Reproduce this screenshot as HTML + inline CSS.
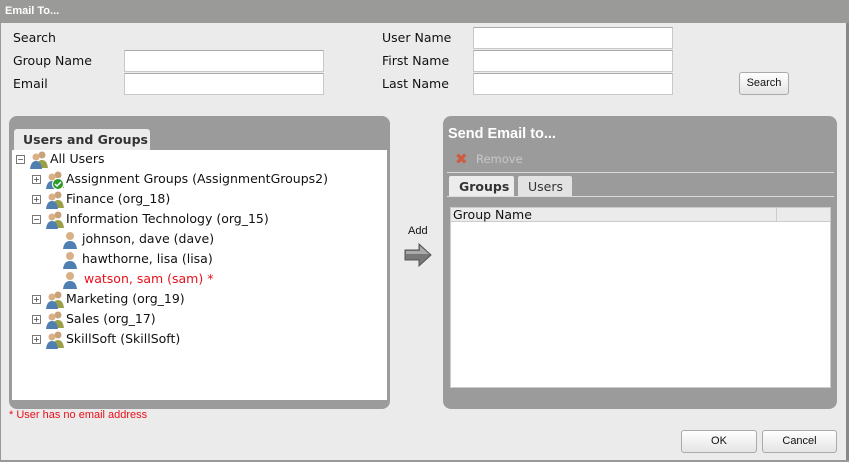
<!DOCTYPE html>
<html><head><style>
body{margin:0;width:849px;height:462px;background:#ebebeb;font-family:"DejaVu Sans","Liberation Sans",sans-serif;font-size:12px;color:#111;position:relative;overflow:hidden}
.a{position:absolute}
.t{position:absolute;white-space:nowrap}
.inp{position:absolute;width:197px;height:20px;background:#fff;border:1px solid #c8c8c8;box-sizing:border-box;border-top-color:#aaa}
.btn{position:absolute;background:linear-gradient(#fff,#e4e4e4);border:1px solid #aaa;border-radius:3px;box-sizing:border-box;font-size:11px;text-align:center;font-family:"Liberation Sans",sans-serif}
.row{position:absolute;height:20px;line-height:20px;font-size:12.5px;white-space:nowrap}
.pm{position:absolute;width:7px;height:7px;border:1px solid #777;background:#fff;font-size:8px;line-height:7px;text-align:center;color:#333}
</style></head><body>
<div class="a" style="left:0;top:0;width:849px;height:23px;background:#9a9a98"></div>
<div class="t" style="left:5px;top:5px;color:#fff;font-weight:bold;font-size:11px;font-family:'Liberation Sans',sans-serif">Email To...</div>
<div class="a" style="left:846px;top:23px;width:3px;height:439px;background:#888"></div>
<div class="a" style="left:0;top:23px;width:1px;height:439px;background:#999"></div>
<div class="a" style="left:0;top:460px;width:849px;height:2px;background:#999"></div>

<div class="t" style="left:13px;top:30px;font-size:12.5px">Search</div>
<div class="t" style="left:13px;top:53px;font-size:12.5px">Group Name</div>
<div class="t" style="left:13px;top:76px;font-size:12.5px">Email</div>
<div class="t" style="left:382px;top:30px;font-size:12.5px">User Name</div>
<div class="t" style="left:382px;top:53px;font-size:12.5px">First Name</div>
<div class="t" style="left:382px;top:76px;font-size:12.5px">Last Name</div>
<div class="inp" style="left:124px;top:50px;width:200px;height:22px"></div>
<div class="inp" style="left:124px;top:73px;width:200px;height:22px"></div>
<div class="inp" style="left:473px;top:27px;width:200px;height:22px"></div>
<div class="inp" style="left:473px;top:50px;width:200px;height:22px"></div>
<div class="inp" style="left:473px;top:73px;width:200px;height:22px"></div>
<div class="btn" style="left:739px;top:72px;width:50px;height:23px;line-height:21px">Search</div>

<!-- left panel -->
<div class="a" style="left:9px;top:116px;width:381px;height:293px;background:#9b9b9b;border-radius:8px"></div>
<div class="a" style="left:14px;top:129px;width:136px;height:22px;background:#ececec;border-radius:3px 3px 0 0"></div>
<div class="t" style="left:23px;top:132px;font-weight:bold;font-size:12.5px;color:#333">Users and Groups</div>
<div class="a" style="left:12px;top:150px;width:375px;height:250px;background:#fff"></div>

<div class="pm" style="left:16px;top:155px">−</div>
<svg class="a" style="left:28px;top:150px" width="22" height="20"><circle cx="14" cy="5" r="3.5" fill="#c9a27a"/><path d="M8 18 Q9 10 14 10 Q19 10 20 18Z" fill="#9aa04a"/><circle cx="8" cy="7" r="3.5" fill="#d9b088"/><path d="M2 19 Q3 11 8 11 Q13 11 14 19Z" fill="#4f7fb0"/></svg>
<div class="row" style="left:50px;top:149px">All Users</div>

<div class="pm" style="left:32px;top:175px">+</div>
<svg class="a" style="left:44px;top:170px" width="22" height="20"><circle cx="14" cy="5" r="3.5" fill="#c9a27a"/><path d="M8 18 Q9 10 14 10 Q19 10 20 18Z" fill="#9aa04a"/><circle cx="8" cy="7" r="3.5" fill="#d9b088"/><path d="M2 19 Q3 11 8 11 Q13 11 14 19Z" fill="#4f7fb0"/><circle cx="14" cy="14" r="5.5" fill="#2a9a2a" stroke="#fff"/><path d="M11 14 l2 2 l4 -4" stroke="#fff" stroke-width="1.5" fill="none"/></svg>
<div class="row" style="left:66px;top:169px">Assignment Groups (AssignmentGroups2)</div>

<div class="pm" style="left:32px;top:195px">+</div>
<svg class="a" style="left:44px;top:190px" width="22" height="20"><circle cx="14" cy="5" r="3.5" fill="#c9a27a"/><path d="M8 18 Q9 10 14 10 Q19 10 20 18Z" fill="#9aa04a"/><circle cx="8" cy="7" r="3.5" fill="#d9b088"/><path d="M2 19 Q3 11 8 11 Q13 11 14 19Z" fill="#4f7fb0"/></svg>
<div class="row" style="left:66px;top:189px">Finance (org_18)</div>

<div class="pm" style="left:32px;top:215px">−</div>
<svg class="a" style="left:44px;top:210px" width="22" height="20"><circle cx="14" cy="5" r="3.5" fill="#c9a27a"/><path d="M8 18 Q9 10 14 10 Q19 10 20 18Z" fill="#9aa04a"/><circle cx="8" cy="7" r="3.5" fill="#d9b088"/><path d="M2 19 Q3 11 8 11 Q13 11 14 19Z" fill="#4f7fb0"/></svg>
<div class="row" style="left:66px;top:209px">Information Technology (org_15)</div>

<svg class="a" style="left:62px;top:230px" width="16" height="20"><circle cx="8" cy="6" r="4" fill="#d9b088"/><path d="M1 19 Q2 11 8 11 Q14 11 15 19Z" fill="#4f7fb0"/></svg>
<div class="row" style="left:82px;top:229px">johnson, dave (dave)</div>
<svg class="a" style="left:62px;top:250px" width="16" height="20"><circle cx="8" cy="6" r="4" fill="#d9b088"/><path d="M1 19 Q2 11 8 11 Q14 11 15 19Z" fill="#4f7fb0"/></svg>
<div class="row" style="left:82px;top:249px">hawthorne, lisa (lisa)</div>
<svg class="a" style="left:62px;top:270px" width="16" height="20"><circle cx="8" cy="6" r="4" fill="#d9b088"/><path d="M1 19 Q2 11 8 11 Q14 11 15 19Z" fill="#4f7fb0"/></svg>
<div class="row" style="left:84px;top:269px;color:#e8101a">watson, sam (sam) *</div>

<div class="pm" style="left:32px;top:295px">+</div>
<svg class="a" style="left:44px;top:290px" width="22" height="20"><circle cx="14" cy="5" r="3.5" fill="#c9a27a"/><path d="M8 18 Q9 10 14 10 Q19 10 20 18Z" fill="#9aa04a"/><circle cx="8" cy="7" r="3.5" fill="#d9b088"/><path d="M2 19 Q3 11 8 11 Q13 11 14 19Z" fill="#4f7fb0"/></svg>
<div class="row" style="left:66px;top:289px">Marketing (org_19)</div>
<div class="pm" style="left:32px;top:315px">+</div>
<svg class="a" style="left:44px;top:310px" width="22" height="20"><circle cx="14" cy="5" r="3.5" fill="#c9a27a"/><path d="M8 18 Q9 10 14 10 Q19 10 20 18Z" fill="#9aa04a"/><circle cx="8" cy="7" r="3.5" fill="#d9b088"/><path d="M2 19 Q3 11 8 11 Q13 11 14 19Z" fill="#4f7fb0"/></svg>
<div class="row" style="left:66px;top:309px">Sales (org_17)</div>
<div class="pm" style="left:32px;top:335px">+</div>
<svg class="a" style="left:44px;top:330px" width="22" height="20"><circle cx="14" cy="5" r="3.5" fill="#c9a27a"/><path d="M8 18 Q9 10 14 10 Q19 10 20 18Z" fill="#9aa04a"/><circle cx="8" cy="7" r="3.5" fill="#d9b088"/><path d="M2 19 Q3 11 8 11 Q13 11 14 19Z" fill="#4f7fb0"/></svg>
<div class="row" style="left:66px;top:329px">SkillSoft (SkillSoft)</div>

<div class="t" style="left:9px;top:409px;color:#e8101a;font-size:11px;font-family:'Liberation Sans',sans-serif">* User has no email address</div>

<!-- add -->
<div class="t" style="left:408px;top:225px;font-size:11px;font-family:'Liberation Sans',sans-serif">Add</div>
<svg class="a" style="left:403px;top:242px" width="30" height="26"><path d="M2 8 H16 V2 L28 13 L16 24 V18 H2Z" fill="#777" stroke="#555"/><path d="M3 9 H17 V4 L26 12 H3Z" fill="#aaa"/></svg>

<!-- right panel -->
<div class="a" style="left:443px;top:116px;width:394px;height:293px;background:#9b9b9b;border-radius:8px"></div>
<div class="t" style="left:448px;top:126px;color:#fff;font-weight:bold;font-size:14.5px;font-family:'Liberation Sans',sans-serif">Send Email to...</div>
<div class="t" style="left:455px;top:150px;color:#d05a40;font-weight:bold;font-size:15px">✖</div>
<div class="t" style="left:476px;top:152px;color:#c8c8c8;font-size:11.5px">Remove</div>
<div class="a" style="left:447px;top:172px;width:387px;height:1px;background:#ddd"></div>
<div class="a" style="left:449px;top:176px;width:65px;height:21px;background:#ececec;border-radius:2px 2px 0 0"></div>
<div class="t" style="left:459px;top:179px;font-weight:bold;font-size:12.5px;color:#333">Groups</div>
<div class="a" style="left:518px;top:176px;width:54px;height:20px;background:#e2e2e2;border-radius:2px 2px 0 0"></div>
<div class="t" style="left:528px;top:179px;font-size:12.5px;color:#333">Users</div>
<div class="a" style="left:447px;top:196px;width:387px;height:1px;background:#ddd"></div>
<div class="a" style="left:450px;top:207px;width:381px;height:181px;background:#fff;border:1px solid #ccc;box-sizing:border-box"></div>
<div class="a" style="left:451px;top:208px;width:379px;height:13px;background:#ebebeb;border-bottom:1px solid #ccc"></div>
<div class="a" style="left:776px;top:208px;width:1px;height:13px;background:#ccc"></div>
<div class="t" style="left:453px;top:207px;font-size:12.5px">Group Name</div>

<div class="btn" style="left:681px;top:430px;width:76px;height:23px;line-height:21px">OK</div>
<div class="btn" style="left:762px;top:430px;width:75px;height:23px;line-height:21px">Cancel</div>
</body></html>
